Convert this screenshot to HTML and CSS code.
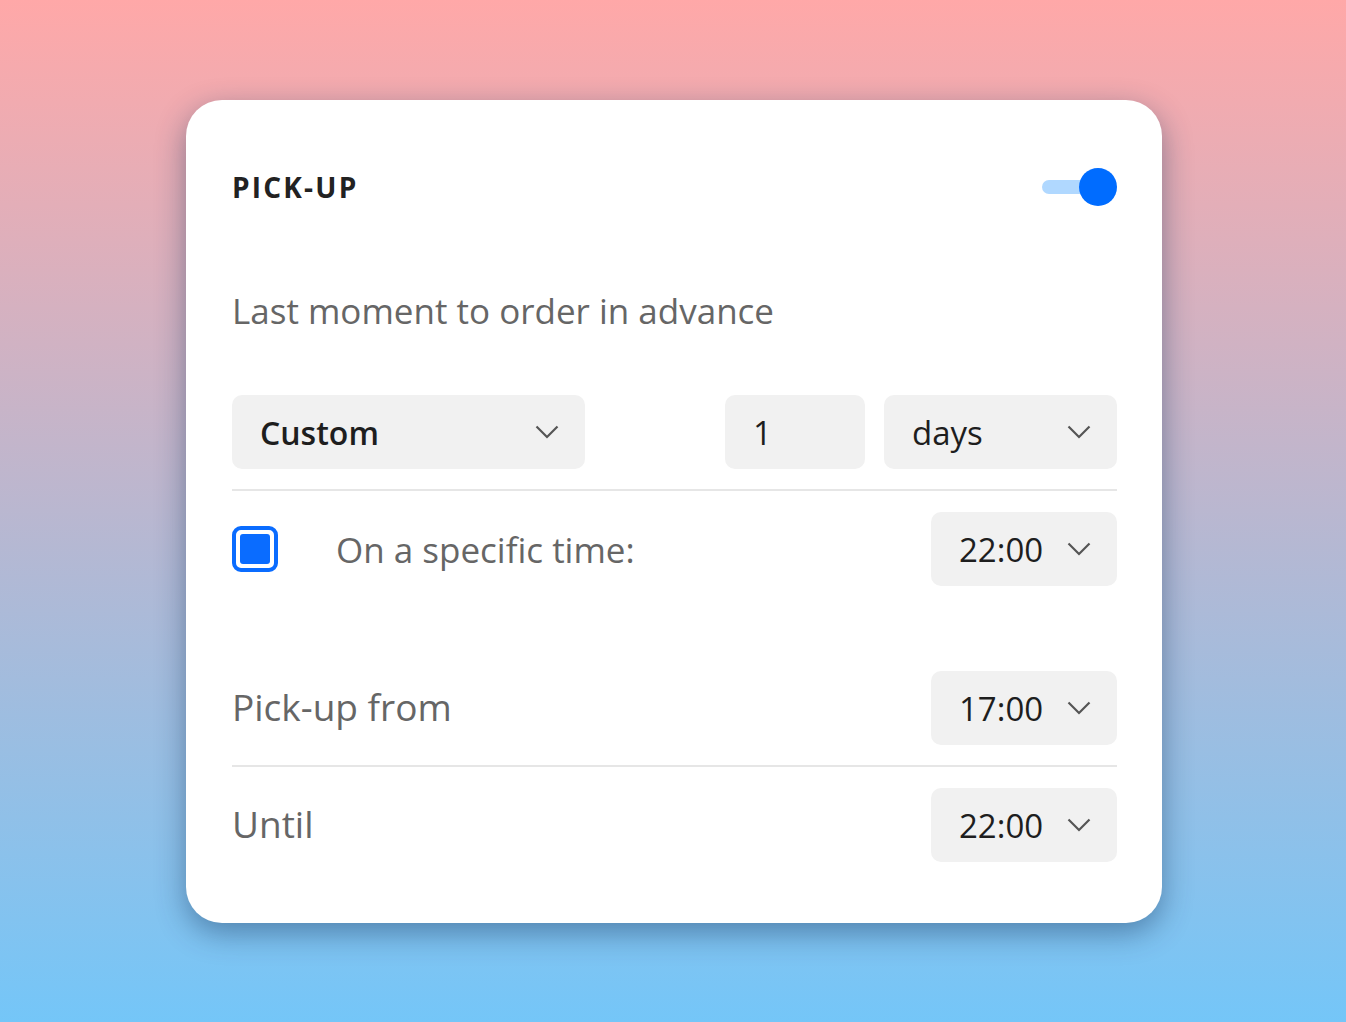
FILE: index.html
```html
<!DOCTYPE html>
<html>

<head>
    <title>Pick-up settings</title>
    <link rel="stylesheet" href="styles.css">
</head>

<body>
    <div class="card">
        <div class="card-header">
            <h2>PICK-UP</h2>
            <div class="toggle">
                <span class="toggle-track"></span>
                <span class="toggle-knob"></span>
            </div>
        </div>

        <p class="subtitle">Last moment to order in advance</p>

        <div class="row row-advance">
            <div class="select select-type">
                <span class="select-value strong">Custom</span>
                <svg class="chevron" viewBox="0 0 24 14"><path d="M1.5 1.5 L12 12 L22.5 1.5"/></svg>
            </div>
            <div class="spacer"></div>
            <div class="select select-amount">
                <span class="select-value">1</span>
            </div>
            <div class="select select-unit">
                <span class="select-value">days</span>
                <svg class="chevron" viewBox="0 0 24 14"><path d="M1.5 1.5 L12 12 L22.5 1.5"/></svg>
            </div>
        </div>

        <div class="row row-specific">
            <span class="checkbox"><span class="checkbox-fill"></span></span>
            <span class="row-label">On a specific time:</span>
            <div class="select select-time">
                <span class="select-value">22:00</span>
                <svg class="chevron" viewBox="0 0 24 14"><path d="M1.5 1.5 L12 12 L22.5 1.5"/></svg>
            </div>
        </div>

        <div class="row row-from">
            <span class="row-label large">Pick-up from</span>
            <div class="select select-time">
                <span class="select-value">17:00</span>
                <svg class="chevron" viewBox="0 0 24 14"><path d="M1.5 1.5 L12 12 L22.5 1.5"/></svg>
            </div>
        </div>

        <div class="row row-until">
            <span class="row-label large">Until</span>
            <div class="select select-time">
                <span class="select-value">22:00</span>
                <svg class="chevron" viewBox="0 0 24 14"><path d="M1.5 1.5 L12 12 L22.5 1.5"/></svg>
            </div>
        </div>
    </div>
</body>

</html>
```

FILE: styles.css
```css
* {
    box-sizing: border-box;
}

body {
    font-family: "Open Sans", "Noto Sans", Arial, sans-serif;
    margin: 0;
    padding: 100px 0 0 2px;
    min-height: 1022px;
    background: linear-gradient(180deg, #ffa8a8 0%, #74c6f8 100%);
}

.card {
    width: 976px;
    margin: 0 auto;
    padding: 67px 45px 61px 46px;
    background-color: #fff;
    border-radius: 36px;
    box-shadow: 0 10px 30px rgba(20, 50, 90, 0.45);
}

.card-header {
    display: flex;
    align-items: center;
    justify-content: space-between;
    height: 40px;
}

.card-header h2 {
    margin: 0;
    font-size: 28px;
    font-weight: 700;
    letter-spacing: 2.2px;
    color: #222;
}

.toggle {
    position: relative;
    width: 75px;
    height: 38px;
}

.toggle-track {
    position: absolute;
    left: 0;
    top: 12px;
    width: 56px;
    height: 14px;
    border-radius: 7px;
    background-color: #b0d8ff;
}

.toggle-knob {
    position: absolute;
    right: 0;
    top: 0;
    width: 38px;
    height: 38px;
    border-radius: 50%;
    background-color: #006cff;
}

.subtitle {
    margin: 83px 0 0;
    height: 44px;
    line-height: 42px;
    font-size: 35px;
    color: #666;
}

.row {
    display: flex;
    align-items: center;
}

.row-advance {
    margin-top: 61px;
    padding-bottom: 20px;
    border-bottom: 2px solid #e6e6e6;
}

.row-specific {
    padding-top: 21px;
}

.row-from {
    margin-top: 85px;
    padding-bottom: 20px;
    border-bottom: 2px solid #e6e6e6;
}

.row-until {
    padding-top: 21px;
}

.spacer {
    flex: 1;
}

.select {
    display: flex;
    align-items: center;
    justify-content: space-between;
    height: 74px;
    padding: 0 26px 0 28px;
    background-color: #f1f1f1;
    border-radius: 10px;
    font-size: 33px;
    color: #1e1e1e;
}

.select-value.strong {
    font-size: 32px;
    font-weight: 600;
}

.select-type {
    width: 353px;
}

.select-amount {
    width: 140px;
}

.select-unit {
    width: 233px;
    margin-left: 19px;
}

.select-time {
    width: 186px;
    margin-left: auto;
}

.chevron {
    width: 24px;
    height: 14px;
    fill: none;
    stroke: #555;
    stroke-width: 2.2;
}

.row-label {
    font-size: 35px;
    color: #666;
}

.row-label.large {
    font-size: 37px;
    line-height: 44px;
    padding-bottom: 3px;
}

.checkbox {
    display: flex;
    width: 46px;
    height: 46px;
    padding: 4px;
    margin-right: 58px;
    border: 4px solid #0a6cff;
    border-radius: 9px;
}

.checkbox-fill {
    flex: 1;
    background-color: #0a6cff;
    border-radius: 3px;
}
```
